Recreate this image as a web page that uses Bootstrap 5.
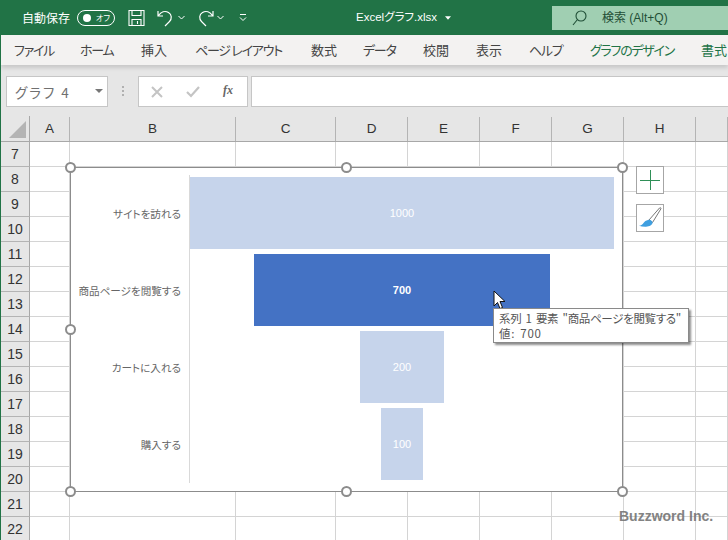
<!doctype html>
<html lang="ja"><head><meta charset="utf-8">
<link href="https://cdn.jsdelivr.net/npm/bootstrap@5.3.0/dist/css/bootstrap.min.css" rel="stylesheet">
<style>
html,body{margin:0;height:540px;overflow:hidden;background:#fff}
body{width:728px;font-family:"Noto Sans CJK JP","Liberation Sans",sans-serif;font-feature-settings:"palt";color:#444;position:relative}
.xl-title{height:35px;background:#217346;color:#fff;font-size:12px;flex:none;position:relative}
.xl-auto{margin-left:22px;width:48px;white-space:nowrap}
.xl-toggle{width:38px;height:16px;border:1px solid #fff;border-radius:8px;margin-left:7px;position:relative;font-size:8px;line-height:14px;padding-left:18px}
.xl-toggle::before{content:"";position:absolute;left:5px;top:3px;width:8px;height:8px;border-radius:50%;background:#fff}
.xl-ic{position:absolute;top:9px}
.xl-file{position:absolute;left:356px;top:9px;font-size:11.5px;line-height:17px;white-space:nowrap;font-family:"Liberation Sans","Noto Sans CJK JP",sans-serif}
.xl-search{position:absolute;left:552px;top:6px;width:176px;height:24px;background:#a0cfb2;color:#1f4e36;font-size:12px;line-height:24px;padding-left:50px;font-family:"Liberation Sans","Noto Sans CJK JP",sans-serif}
.xl-tabs{height:30px;background:#f3f2f1;font-size:13px;color:#444;position:relative;flex:none;box-shadow:0 3px 4px rgba(0,0,0,.13);z-index:2;margin-left:1px}
.xl-tabs span{position:absolute;top:5px;line-height:20px;white-space:nowrap}
.xl-tabs .xl-kana{letter-spacing:-1.25px}
.xl-tabs .xl-green{color:#217346}
.xl-fbar{height:51px;background:#e6e6e6;flex:none;padding:11px 0 9px 5px;margin-left:1px;gap:0}
.xl-name{width:102px;height:31px;background:#fff;border:1px solid #c6c6c6;font-size:13.5px;color:#707070;line-height:30px;padding-left:8px;letter-spacing:2px;position:relative}
.xl-name::after{content:"";position:absolute;right:4px;top:12px;border:4px solid transparent;border-top:4px solid #777;border-bottom:0}
.xl-dots{width:30px;padding:10px 0 0 14px}
.xl-fx{width:110px;height:31px;background:#fff;border:1px solid #c6c6c6;position:relative;color:#666}
.xl-fx svg{position:absolute;top:9px}
.xl-fx em{position:absolute;left:84px;top:3px;font:italic bold 12px/20px "Liberation Serif",serif}
.xl-input{flex:1;height:31px;background:#fff;border:1px solid #c6c6c6;margin-left:3px;border-right:0}
.xl-grid{display:grid;grid-template-columns:29px 40px 166px 100px 72px 72px 72px 72px 72px 32px;margin-left:1px}
.xl-head{height:26px;background:#e6e6e6;border-bottom:1px solid #a8a8a8;font-size:13.5px;color:#333;font-family:"Liberation Sans",sans-serif;flex:none}
.xl-head span{border-right:1px solid #b4b4b4;text-align:center;margin-top:1px;height:24px;line-height:24px}
.xl-head .xl-corner{position:relative;margin-top:0;height:25px;border-right:1px solid #a8a8a8}
.xl-corner::after{content:"";position:absolute;right:3px;bottom:3px;border-style:solid;border-width:0 0 17px 17px;border-color:transparent transparent #b4b4b4 transparent}
.xl-row{height:25px;font-family:"Liberation Sans",sans-serif}
.xl-row span{border-right:1px solid #d4d4d4;border-bottom:1px solid #d4d4d4}
.xl-row span:first-child{background:#e6e6e6;border-right:1px solid #a8a8a8;border-bottom:1px solid #b4b4b4;text-align:center;font-size:14px;line-height:24px;color:#333}
.xl-left{position:absolute;left:0;top:35px;bottom:0;width:1px;background:#217346;z-index:3}
.xl-chart{position:absolute;left:70px;top:167px;width:553px;height:325px;background:#fff;border:1px solid #8c8c8c;padding:9px 0 0 0;z-index:4;font-size:10.6px;color:#666}
.xl-frow{display:flex;height:72px;margin-bottom:5px}
.xl-lab{width:110px;flex:none;text-align:right;line-height:73px;white-space:nowrap}
.xl-axis{margin-left:8px;width:1px;flex:none;background:#d9d9d9;margin-top:-2.500px;margin-bottom:-2.500px}
.xl-area{width:424px;flex:none;display:flex;justify-content:center}
.xl-bar{height:72px;background:#c6d4eb;color:#fff;text-align:center;line-height:72px;font-size:11px;font-family:"Liberation Sans",sans-serif}
.xl-bar.xl-sel{background:#4472c4;font-weight:700}
.xl-h{position:absolute;width:11px;height:11px;border-radius:50%;background:#fff;border:2px solid #8c8c8c;z-index:5;margin:-5.5px 0 0 -5.5px}
.xl-side{position:absolute;left:636px;width:28px;height:28px;background:#fff;border:1px solid #a6a6a6;z-index:5}
.xl-tip{position:absolute;left:493px;top:308px;width:196px;height:35px;background:#fff;border:1px solid #8a8a8a;box-shadow:2px 2px 2px rgba(0,0,0,.45);z-index:7;font-size:11.5px;line-height:15px;color:#555;padding:2px 5px;white-space:nowrap;word-spacing:2px;letter-spacing:-.32px}
.xl-tipval{letter-spacing:.7px}
.xl-cursor{position:absolute;left:493px;top:290px;z-index:6}
.xl-mark{position:absolute;left:619px;top:506px;font:700 14px/20px "Liberation Sans",sans-serif;color:#6e6e6e;opacity:.85;z-index:8;white-space:nowrap}
</style></head>
<body class="d-flex flex-column">
<div class="xl-left"></div>
<header class="xl-title d-flex align-items-center">
  <span class="xl-auto">自動保存</span>
  <span class="xl-toggle">オフ</span>
  <svg class="xl-ic" style="left:128px" width="17" height="18" viewBox="0 0 17 18" fill="none" stroke="#fff" stroke-width="1.1"><path d="M1 1.500h15v15H1zM4 1.500v5h9v-5M4 16.500v-6h9v6M9.500 12v3"/></svg>
  <svg class="xl-ic" style="left:157px" width="17" height="18" viewBox="0 0 17 18" fill="none" stroke="#fff" stroke-width="1.2"><path d="M1 2v5h5M1.500 6.500C4 3 8 1.500 11.500 3.500c3.500 2 3.500 6.500 1 9L8 17"/></svg>
  <svg class="xl-ic" style="left:178px;top:15px" width="7" height="5" viewBox="0 0 7 5" fill="none" stroke="#fff"><path d="M.5 1l3 3 3-3"/></svg>
  <svg class="xl-ic" style="left:197px" width="17" height="18" viewBox="0 0 17 18" fill="none" stroke="#fff" stroke-width="1.2"><path d="M16 2v5h-5M15.500 6.500C13 3 9 1.500 5.500 3.500c-3.500 2-3.500 6.500-1 9L9 17"/></svg>
  <svg class="xl-ic" style="left:217px;top:15px" width="7" height="5" viewBox="0 0 7 5" fill="none" stroke="#fff"><path d="M.5 1l3 3 3-3"/></svg>
  <svg class="xl-ic" style="left:239px;top:13px" width="8" height="9" viewBox="0 0 8 9" fill="none" stroke="#fff"><path d="M1 1.500h6M1 4.500l3 3 3-3"/></svg>
  <span class="xl-file">Excelグラフ.xlsx</span>
  <svg class="xl-ic" style="left:445px;top:16px" width="6" height="4" viewBox="0 0 7 4"><path d="M0 0h7L3.500 4z" fill="#fff"/></svg>
  <div class="xl-search">
    <svg class="position-absolute" style="left:20px;top:4px" width="15" height="16" viewBox="0 0 15 16" fill="none" stroke="#1f4e36" stroke-width="1.1"><circle cx="9" cy="6" r="5"/><path d="M5.500 9.500L1 15"/></svg>
    検索 (Alt+Q)
  </div>
</header>
<nav class="xl-tabs">
  <span class="xl-kana" style="left:13px">ファイル</span><span class="xl-kana" style="left:79px">ホーム</span><span style="left:140px">挿入</span><span class="xl-kana" style="left:194px">ページ レイアウト</span><span style="left:310px">数式</span><span class="xl-kana" style="left:362px">データ</span><span style="left:422px">校閲</span><span style="left:475px">表示</span><span class="xl-kana" style="left:528px">ヘルプ</span><span class="xl-green xl-kana" style="left:589px">グラフのデザイン</span><span class="xl-green" style="left:700px">書式</span>
</nav>
<div class="xl-fbar d-flex">
  <div class="xl-name">グラフ 4</div>
  <div class="xl-dots"><svg class="d-block" width="3" height="11" viewBox="0 0 3 11" fill="#b0b0b0"><rect x="0" y="0" width="2" height="2"/><rect x="0" y="4" width="2" height="2"/><rect x="0" y="8" width="2" height="2"/></svg></div>
  <div class="xl-fx">
    <svg style="left:12px" width="12" height="12" viewBox="0 0 12 12" stroke="#c4c4c4" stroke-width="2"><path d="M1 1l10 10M11 1L1 11"/></svg>
    <svg style="left:47px" width="14" height="12" viewBox="0 0 14 12" fill="none" stroke="#c4c4c4" stroke-width="2.2"><path d="M1 6l4 4 8-9"/></svg>
    <em>fx</em>
  </div>
  <div class="xl-input"></div>
</div>
<div class="xl-grid xl-head">
  <span class="xl-corner"></span><span>A</span><span>B</span><span>C</span><span>D</span><span>E</span><span>F</span><span>G</span><span>H</span><span></span>
</div>
<div>
<div class="xl-grid xl-row"><span>7</span><span></span><span></span><span></span><span></span><span></span><span></span><span></span><span></span><span></span></div>
<div class="xl-grid xl-row"><span>8</span><span></span><span></span><span></span><span></span><span></span><span></span><span></span><span></span><span></span></div>
<div class="xl-grid xl-row"><span>9</span><span></span><span></span><span></span><span></span><span></span><span></span><span></span><span></span><span></span></div>
<div class="xl-grid xl-row"><span>10</span><span></span><span></span><span></span><span></span><span></span><span></span><span></span><span></span><span></span></div>
<div class="xl-grid xl-row"><span>11</span><span></span><span></span><span></span><span></span><span></span><span></span><span></span><span></span><span></span></div>
<div class="xl-grid xl-row"><span>12</span><span></span><span></span><span></span><span></span><span></span><span></span><span></span><span></span><span></span></div>
<div class="xl-grid xl-row"><span>13</span><span></span><span></span><span></span><span></span><span></span><span></span><span></span><span></span><span></span></div>
<div class="xl-grid xl-row"><span>14</span><span></span><span></span><span></span><span></span><span></span><span></span><span></span><span></span><span></span></div>
<div class="xl-grid xl-row"><span>15</span><span></span><span></span><span></span><span></span><span></span><span></span><span></span><span></span><span></span></div>
<div class="xl-grid xl-row"><span>16</span><span></span><span></span><span></span><span></span><span></span><span></span><span></span><span></span><span></span></div>
<div class="xl-grid xl-row"><span>17</span><span></span><span></span><span></span><span></span><span></span><span></span><span></span><span></span><span></span></div>
<div class="xl-grid xl-row"><span>18</span><span></span><span></span><span></span><span></span><span></span><span></span><span></span><span></span><span></span></div>
<div class="xl-grid xl-row"><span>19</span><span></span><span></span><span></span><span></span><span></span><span></span><span></span><span></span><span></span></div>
<div class="xl-grid xl-row"><span>20</span><span></span><span></span><span></span><span></span><span></span><span></span><span></span><span></span><span></span></div>
<div class="xl-grid xl-row"><span>21</span><span></span><span></span><span></span><span></span><span></span><span></span><span></span><span></span><span></span></div>
<div class="xl-grid xl-row"><span>22</span><span></span><span></span><span></span><span></span><span></span><span></span><span></span><span></span><span></span></div>
</div>

<section class="xl-chart">
  <div class="xl-frow"><div class="xl-lab">サイトを訪れる</div><div class="xl-axis"></div><div class="xl-area"><div class="xl-bar" style="width:100%">1000</div></div></div>
  <div class="xl-frow"><div class="xl-lab">商品ページを閲覧する</div><div class="xl-axis"></div><div class="xl-area"><div class="xl-bar xl-sel" style="width:70%">700</div></div></div>
  <div class="xl-frow"><div class="xl-lab">カートに入れる</div><div class="xl-axis"></div><div class="xl-area"><div class="xl-bar" style="width:20%">200</div></div></div>
  <div class="xl-frow"><div class="xl-lab">購入する</div><div class="xl-axis"></div><div class="xl-area"><div class="xl-bar" style="width:10%">100</div></div></div>
</section>
<i class="xl-h" style="left:70px;top:167px"></i><i class="xl-h" style="left:346.500px;top:167px"></i><i class="xl-h" style="left:622.500px;top:167px"></i>
<i class="xl-h" style="left:70px;top:329px"></i><i class="xl-h" style="left:622.500px;top:329px"></i>
<i class="xl-h" style="left:70px;top:491px"></i><i class="xl-h" style="left:346.500px;top:491px"></i><i class="xl-h" style="left:622.500px;top:491px"></i>
<div class="xl-side" style="top:166px"><svg class="d-block" width="26" height="26" viewBox="0 0 26 26" stroke="#2f8f57" stroke-width="1"><path d="M3 13.500h20M13.500 3v20"/></svg></div>
<div class="xl-side" style="top:204px"><svg class="d-block" width="26" height="26" viewBox="0 0 26 26"><path d="M12 15L22.500 3c1-.8 1.800 0 1.300 1L15.500 17.500z" fill="#fff" stroke="#777"/><path d="M11 15c2-.8 4.500 1 4.500 2.500 0 2.500-3 4-6.500 4.200-2.500.1-5-.3-7-1 2.500-.3 3.500-1 4.500-2.700 1-1.700 2.500-2.500 4.500-3z" fill="#3f9fe0"/></svg></div>
<svg class="xl-cursor" width="13" height="20" viewBox="0 0 13 20"><path d="M1 1v15l3.500-3.500 2.500 6 2.500-1-2.500-6H12z" fill="#fff" stroke="#111"/></svg>
<div class="xl-tip">系列 1 要素 "商品ページを閲覧する"<br><span class="xl-tipval">値: 700</span></div>
<div class="xl-mark">Buzzword Inc.</div>
</body></html>
